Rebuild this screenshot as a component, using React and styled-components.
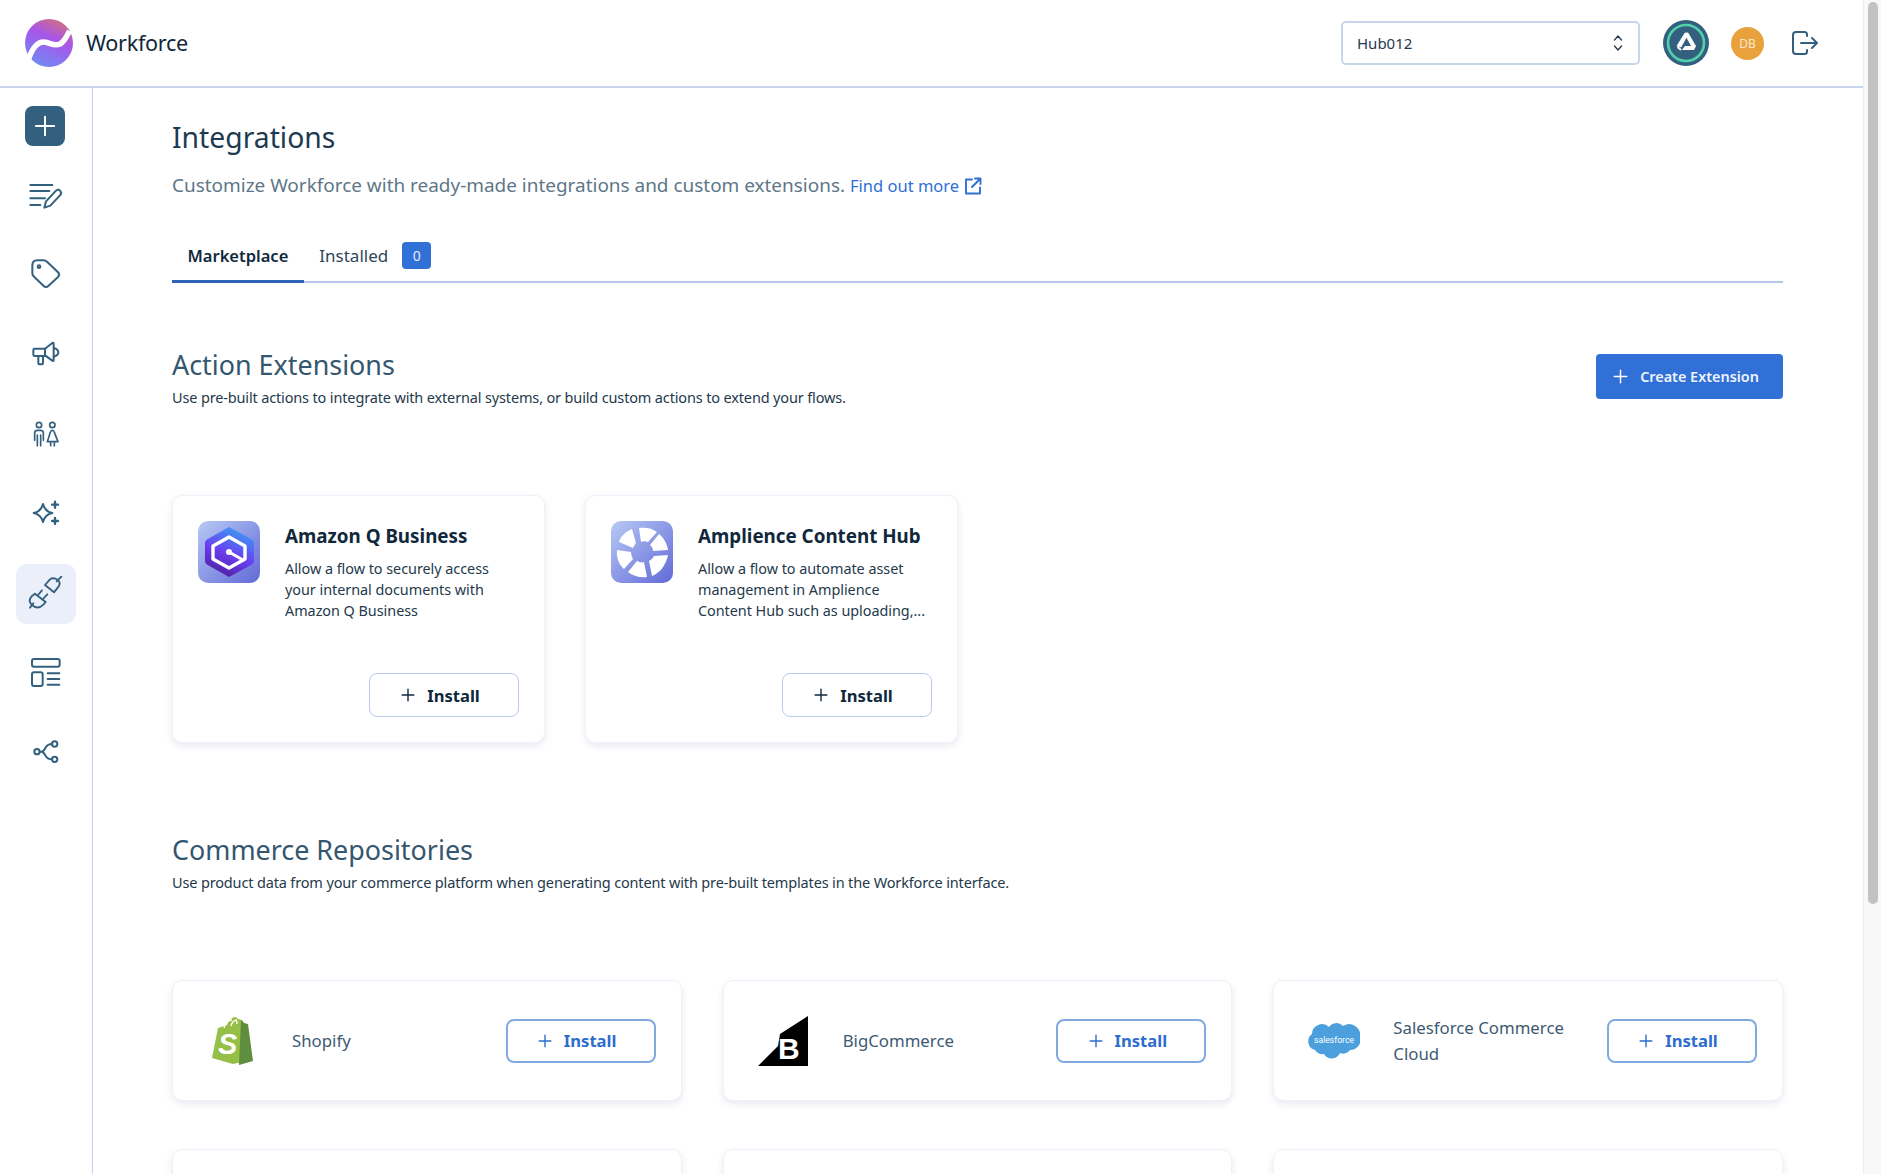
import React from "react";
import styled, { createGlobalStyle } from "styled-components";

const Global = createGlobalStyle`
  html, body { margin: 0; padding: 0; background: #fff; overflow: hidden; }
  body { font-family: "Noto Sans", "Open Sans", sans-serif; -webkit-font-smoothing: antialiased; }
  * { box-sizing: border-box; }
`;

const Shell = styled.div`
  display: flex;
  width: 1881px;
  height: 1174px;
  overflow: hidden;
`;
const Page = styled.div`
  flex: 1;
  min-width: 0;
  display: flex;
  flex-direction: column;
`;
const ScrollTrack = styled.div`
  width: 18px;
  background: #f8f8f8;
  border-left: 1px solid #ececec;
  padding: 2px 3px 0 4px;
`;
const ScrollThumb = styled.div`
  height: 902px;
  border-radius: 5px;
  background: #c2c2c2;
`;

const Header = styled.header`
  height: 88px;
  flex: none;
  display: flex;
  align-items: center;
  border-bottom: 2px solid #c9d5ec;
  padding: 0 44px 0 25px;
`;
const Brand = styled.div`
  display: flex;
  align-items: center;
  gap: 13px;
`;
const BrandName = styled.span`
  font-size: 21.6px;
  color: #10283c;
  letter-spacing: -0.3px;
  position: relative;
  top: -0.5px;
`;
const HeaderRight = styled.div`
  margin-left: auto;
  display: flex;
  align-items: center;
`;
const HubSelect = styled.div`
  width: 299px;
  height: 44px;
  border: 2px solid #c9d5ec;
  border-radius: 5px;
  display: flex;
  align-items: center;
  justify-content: space-between;
  padding: 0 15px 0 14px;
  font-size: 15px;
  color: #1f3a50;
`;
const RingBadge = styled.div`
  width: 46px;
  height: 46px;
  margin-left: 23px;
  display: flex;
`;
const Avatar = styled.div`
  width: 33px;
  height: 33px;
  margin-left: 22px;
  border-radius: 50%;
  background: #e8a13b;
  color: #f9e8cd;
  font-size: 12px;
  display: flex;
  align-items: center;
  justify-content: center;
`;
const LogoutWrap = styled.div`
  margin-left: 28px;
  margin-right: 1px;
  display: flex;
`;

const Body = styled.div`
  flex: 1;
  display: flex;
  min-height: 0;
`;
const Sidebar = styled.nav`
  width: 92.5px;
  flex: none;
  border-right: 1.5px solid #c3d0ec;
  display: flex;
  flex-direction: column;
  align-items: flex-start;
  gap: 19.7px;
  padding: 18px 0 0 15.5px;
`;
const AddButton = styled.div`
  width: 40px;
  height: 40px;
  margin-left: 9.5px;
  border-radius: 8px;
  background: #34607f;
  display: flex;
  align-items: center;
  justify-content: center;
`;
const NavItem = styled.div`
  width: 60px;
  height: 60px;
  border-radius: 11px;
  background: ${(p) => (p.$active ? "#ebeffa" : "transparent")};
  display: flex;
  align-items: center;
  justify-content: center;
`;

const Main = styled.main`
  flex: 1;
  min-width: 0;
  padding: 31px 80px 0 79.5px;
  overflow: hidden;
`;
const Title = styled.h1`
  margin: 0;
  font-size: 28.3px;
  line-height: 36px;
  font-weight: 400;
  color: #1c3a50;
`;
const Subtitle = styled.p`
  margin: 17px 0 0;
  height: 26px;
  display: flex;
  align-items: center;
  font-size: 18.95px;
  line-height: 26px;
  color: #5d7688;
`;
const MoreLink = styled.a`
  margin-left: 5px;
  padding-top: 1px;
  font-size: 16.5px;
  color: #2f6fd6;
  display: inline-flex;
  align-items: center;
  gap: 5px;
`;
const Tabs = styled.div`
  margin-top: 31px;
  height: 54px;
  display: flex;
  border-bottom: 2px solid #b8c6ee;
`;
const Tab = styled.div`
  height: 54px;
  padding: 1.5px 15.5px 0;
  display: flex;
  align-items: center;
  gap: 14px;
  font-size: ${(p) => (p.$active ? "16.5px" : "17px")};
  font-weight: ${(p) => (p.$active ? 600 : 400)};
  color: ${(p) => (p.$active ? "#10283c" : "#2f4659")};
  border-bottom: 3px solid ${(p) => (p.$active ? "#2e65b8" : "transparent")};
`;
const Count = styled.span`
  width: 29px;
  height: 27px;
  border-radius: 4px;
  background: #3170d6;
  color: #e4ecfa;
  font-size: 14px;
  font-weight: 400;
  display: flex;
  align-items: center;
  justify-content: center;
`;
const SectionHead = styled.div`
  margin-top: ${(p) => p.$top}px;
  display: flex;
  justify-content: space-between;
  align-items: flex-start;
`;
const SectionTitle = styled.h2`
  margin: 0;
  font-size: 26.9px;
  line-height: 33px;
  font-weight: 400;
  color: #34566e;
`;
const SectionDesc = styled.p`
  margin: 5px 0 0;
  font-size: 14.5px;
  line-height: 22px;
  letter-spacing: -0.15px;
  color: #24394b;
`;
const PrimaryButton = styled.button`
  width: 187px;
  height: 45px;
  margin-top: 6px;
  padding: 0 7px 0 0;
  border: none;
  border-radius: 4px;
  background: #3170d6;
  color: #eef3fc;
  font: 600 14.4px "Noto Sans", sans-serif;
  display: flex;
  align-items: center;
  justify-content: center;
  gap: 12px;
`;
const ActionGrid = styled.div`
  margin-top: 87px;
  display: flex;
  gap: 40px;
`;
const cardBase = `
  background: #fff;
  border: 1px solid #eef0fa;
  border-radius: 10px;
  box-shadow: 0 3px 7px rgba(70, 90, 150, 0.13);
`;
const ActionCard = styled.article`
  ${cardBase}
  width: 373px;
  height: 248px;
  padding: 25px;
  display: flex;
  flex-direction: column;
`;
const ActionTop = styled.div`
  display: flex;
  gap: 25px;
`;
const ActionText = styled.div`
  padding-top: 3px;
  min-width: 0;
`;
const ActionName = styled.h3`
  margin: 0;
  font-size: 18.8px;
  line-height: 24px;
  font-weight: 700;
  color: #10283c;
  white-space: nowrap;
`;
const ActionDesc = styled.p`
  margin: 10px 0 0;
  font-size: 14.4px;
  line-height: 21px;
  letter-spacing: -0.03px;
  color: #24394b;
  white-space: nowrap;
`;
const InstallButton = styled.button`
  width: 150px;
  height: 44px;
  padding: 0 7px 0 0;
  border-radius: 8px;
  background: #fff;
  font: 700 16.6px "Noto Sans", sans-serif;
  display: flex;
  align-items: center;
  justify-content: center;
  gap: 12px;
  flex: none;
  border: ${(p) => (p.$accent ? "2.5px solid #82aae2" : "1.5px solid #bccaf0")};
  color: ${(p) => (p.$accent ? "#2e6cd0" : "#10283c")};
`;
const ActionFoot = styled.div`
  margin-top: auto;
  display: flex;
  justify-content: flex-end;
`;
const CommerceGrid = styled.div`
  margin-top: 87px;
  display: grid;
  grid-template-columns: repeat(3, 1fr);
  column-gap: 41px;
  row-gap: 48px;
`;
const CommerceCard = styled.article`
  ${cardBase}
  height: 121px;
  display: flex;
  align-items: center;
  padding-right: 25px;
`;
const LogoSlot = styled.div`
  width: 119px;
  flex: none;
  display: flex;
  justify-content: center;
`;
const CommerceName = styled.div`
  flex: 1;
  min-width: 0;
  font-size: 16.8px;
  line-height: 26px;
  color: #3d5a72;
`;

const Icon = ({ box, children, size = 36, weight = 6 }) => (
  <svg width={size} height={size} viewBox={box} fill="none" stroke="#34607f" strokeWidth={weight} strokeLinecap="round" strokeLinejoin="round">
    {children}
  </svg>
);

const Plus = ({ size = 18, color = "currentColor", width = 2 }) => (
  <svg width={size} height={size} viewBox="0 0 18 18" fill="none" stroke={color} strokeWidth={width} strokeLinecap="round">
    <path d="M9 1.500v15M1.500 9h15" />
  </svg>
);

const LogoMark = () => (
  <svg width="48" height="48" viewBox="0 0 48 48">
    <defs>
      <linearGradient id="lg1" x1="0.75" y1="0" x2="0.3" y2="1">
        <stop offset="0" stopColor="#d2707f" />
        <stop offset="0.4" stopColor="#a855ea" />
        <stop offset="1" stopColor="#6f8cf3" />
      </linearGradient>
    </defs>
    <circle cx="24" cy="24" r="24" fill="url(#lg1)" />
    <path d="M3 42C7 29 13 21 22 23.500c4.500 1.300 8 4 13 1.500 4.500-2.300 7-8 9.500-13" fill="none" stroke="#fff" strokeWidth="5.500" />
  </svg>
);

const AmazonQ = () => (
  <svg width="62" height="62" viewBox="0 0 62 62">
    <defs>
      <linearGradient id="tile1" x1="0" y1="0" x2="1" y2="1">
        <stop offset="0" stopColor="#b7c9f5" />
        <stop offset="1" stopColor="#6169d6" />
      </linearGradient>
      <linearGradient id="hex1" x1="0.7" y1="0" x2="0.3" y2="1">
        <stop offset="0" stopColor="#3aa0f5" />
        <stop offset="0.55" stopColor="#6a3df0" />
        <stop offset="1" stopColor="#4e1f9e" />
      </linearGradient>
    </defs>
    <rect width="62" height="62" rx="10" fill="url(#tile1)" />
    <path d="M31 6l23 12.500a4 4 0 0 1 2 3.500v18a4 4 0 0 1-2 3.500L31 56 9 43.500a4 4 0 0 1-2-3.500V22a4 4 0 0 1 2-3.500z" fill="url(#hex1)" />
    <path d="M31 16l16 9v13l-16 9-16-9V25z" fill="none" stroke="#fff" strokeWidth="3.400" strokeLinejoin="round" />
    <circle cx="31" cy="31" r="3" fill="#fff" />
    <path d="M31 31l14 8" stroke="#fff" strokeWidth="3" />
  </svg>
);

const Amplience = () => (
  <svg width="62" height="62" viewBox="0 0 62 62">
    <defs>
      <linearGradient id="tile2" x1="0" y1="0" x2="1" y2="1">
        <stop offset="0" stopColor="#b7c9f5" />
        <stop offset="1" stopColor="#6169d6" />
      </linearGradient>
    </defs>
    <rect width="62" height="62" rx="10" fill="url(#tile2)" />
    <g fill="#fff">
      <path d="M28 7c7-1 13 0 18 4l-9 10c-3-1-5-1-7 0z" />
      <path d="M8 21c2-6 6-10 13-13l4 14c-1 1-2 3-3 5z" />
      <path d="M6 29l14 2c0 3 1 5 2 7l-9 10C8 44 5 36 6 29z" />
      <path d="M17 51l9-11c2 1 5 2 7 1l3 15c-7 1-14-1-19-5z" />
      <path d="M41 55l-3-15c2-1 4-3 5-5l14-1c-2 10-8 18-16 21z" />
      <path d="M57 29l-15 1c0-3-1-4-3-6l9-11c5 4 8 10 9 16z" />
    </g>
  </svg>
);

const Shopify = () => (
  <svg width="44" height="49" viewBox="0 0 44 49">
    <path d="M1 42L7 12l9-3c2-5 5-8 9-8l2 2 4 1 2 3 3 38-14 3z" fill="#95bf47" />
    <path d="M30 4l3 3 4 1 5 37-14 4z" fill="#5e8e3e" />
    <path d="M13 12c1-5 4-8 8-8M20 10c1-4 3-6 6-6M26 8c0-2 0-3-1-4" fill="none" stroke="#fff" strokeWidth="1.400" />
    <text x="7" y="38" fontFamily="Liberation Sans, sans-serif" fontSize="29" fontWeight="700" fontStyle="italic" fill="#fff">S</text>
  </svg>
);

const BigCommerce = () => (
  <svg width="50" height="50" viewBox="0 0 50 50">
    <path d="M50 0v50H0l20-20 2-12z" fill="#000" />
    <text x="20" y="43" fontFamily="Liberation Sans, sans-serif" fontSize="30" fontWeight="700" fill="#fff">B</text>
  </svg>
);

const Salesforce = () => (
  <svg width="52" height="37" viewBox="0 0 52 37">
    <path d="M21 5a9 9 0 0 1 14-1 11 11 0 0 1 17 11 10 10 0 0 1-10 13 8 8 0 0 1-10 3 9 9 0 0 1-16 1 9 9 0 0 1-9-4A9 9 0 0 1 4 12a10 10 0 0 1 17-7z" fill="#4a9fdc" />
    <text x="26" y="20.500" textAnchor="middle" fontFamily="Roboto, sans-serif" fontSize="8.600" fill="#fff">salesforce</text>
  </svg>
);

const actions = [
  { name: "Amazon Q Business", logo: <AmazonQ />, lines: ["Allow a flow to securely access", "your internal documents with", "Amazon Q Business"] },
  { name: "Amplience Content Hub", logo: <Amplience />, lines: ["Allow a flow to automate asset", "management in Amplience", "Content Hub such as uploading,..."] },
];

const commerce = [
  { name: "Shopify", logo: <Shopify /> },
  { name: "BigCommerce", logo: <BigCommerce /> },
  { name: "Salesforce Commerce Cloud", logo: <Salesforce /> },
  {},
  {},
  {},
];

const navIcons = [
  <Icon box="81 51 108 108" key="doc">
    <path d="M88 72H154M88 90H145M88 112H132M88 132H118" />
    <path d="M130 140l5-19 30-32c5-4 10-3 13 1s3 9-1 13l-29 31z" />
  </Icon>,
  <Icon box="81 293 108 108" key="tag">
    <path d="M94 318c0-10 6-15 15-15h17c5 0 9 1 13 5l32 31c4 4 4 10 0 14l-29 27c-4 4-10 4-14 0l-31-30c-2-2-3-5-3-8z" />
    <circle cx="114" cy="322" r="4" />
  </Icon>,
  <Icon box="81 533 108 108" key="mega">
    <path d="M132 568l22-17c2-1 4 0 4 2v49c0 3-2 4-4 2l-22-16z" />
    <path d="M132 568h-31c-2 0-4 2-4 4v14c0 2 2 4 4 4h31z" />
    <path d="M112 590v20c0 3 2 5 5 5h4c3 0 5-2 5-5v-20" />
    <path d="M158 566c9 2 14 7 14 13s-5 11-14 13" />
  </Icon>,
  <Icon box="81 772 108 108" key="people" weight={5}>
    <circle cx="114" cy="796" r="8" />
    <circle cx="154" cy="796" r="8" />
    <path d="M101 842v-22c0-5 3-8 8-8h10c5 0 8 3 8 8v22M109 826v32M119 826v32" />
    <path d="M139 846l9-28c1-4 3-6 6-6s5 2 6 6l11 28zM149 846v12M160 846v12" />
  </Icon>,
  <Icon box="77 49 108 108" key="spark">
    <path d="M122 73c4 16 12 24 28 27-16 3-24 11-28 27-4-16-12-24-28-27 16-3 24-11 28-27z" />
    <path d="M158 66v18M149 75h18M158 115v18M149 124h18" strokeWidth="7" />
  </Icon>,
  <Icon box="82 290 108 108" key="plug" weight={5.500}>
    <path d="M133 318l27 22 14-18c6-10 4-15-4-20-7-5-14-6-22-1z" transform="translate(0 -1)" />
    <path d="M168 306l14-14" />
    <path d="M103 343l32 25-7 8c-12 12-24 10-34 1-9-9-8-19-1-26z" />
    <path d="M112 347l12-14M127 359l13-14M98 372l-10 13" />
  </Icon>,
  <Icon box="81 528 108 108" key="layout">
    <rect x="93" y="537" width="83" height="23" rx="6" />
    <rect x="93" y="577" width="32" height="41" rx="6" />
    <path d="M140 580h35M140 597h35M140 614h35" />
  </Icon>,
  <Icon box="77 766 108 108" key="share">
    <circle cx="104" cy="813" r="8" />
    <circle cx="157" cy="790" r="8" />
    <circle cx="157" cy="836" r="8" />
    <path d="M112 813h5c7 0 9-5 12-11 4-8 9-12 20-12M117 813c7 0 9 5 12 11 4 8 9 12 20 12" />
  </Icon>,
];

export default function App() {
  return (
    <Shell>
      <Global />
      <Page>
        <Header>
          <Brand>
            <LogoMark />
            <BrandName>Workforce</BrandName>
          </Brand>
          <HeaderRight>
            <HubSelect>
              Hub012
              <svg width="10" height="18" viewBox="0 0 10 18" fill="none" stroke="#24394b" strokeWidth="1.300" strokeLinecap="round" strokeLinejoin="round">
                <path d="M1.500 6L5 2l3.500 4M1.500 12L5 16l3.500-4" />
              </svg>
            </HubSelect>
            <RingBadge>
              <svg width="46" height="46" viewBox="0 0 46 46">
                <circle cx="23" cy="23" r="23" fill="#34607f" />
                <circle cx="23" cy="23" r="18" fill="none" stroke="#4fd0ab" strokeWidth="2.600" />
                <path d="M22 13h3l7.500 13-3 2L23.500 17 18 27l-4-1z" fill="#fff" stroke="#fff" strokeWidth="0.800" strokeLinejoin="round" />
                <path d="M19 30l3-4h11l-2 4z" fill="#fff" />
                <path d="M14.500 27l3.500 3" stroke="#fff" strokeWidth="2" />
              </svg>
            </RingBadge>
            <Avatar>DB</Avatar>
            <LogoutWrap>
              <svg width="26" height="24" viewBox="0 0 26 24" fill="none" stroke="#34607f" strokeWidth="2" strokeLinecap="round" strokeLinejoin="round">
                <path d="M15 5V3.500C15 2 14 1 12.500 1H4C2 1 1 2 1 4v16c0 2 1 3 3 3h8.500c1.500 0 2.500-1 2.500-2.500V19" />
                <path d="M9 12h16M20 7l5 5-5 5" />
              </svg>
            </LogoutWrap>
          </HeaderRight>
        </Header>
        <Body>
          <Sidebar>
            <AddButton>
              <Plus size={22} color="#fff" width={1.6} />
            </AddButton>
            {navIcons.map((ic, i) => (
              <NavItem key={i} $active={i === 5}>
                {ic}
              </NavItem>
            ))}
          </Sidebar>
          <Main>
            <Title>Integrations</Title>
            <Subtitle>
              Customize Workforce with ready-made integrations and custom extensions.
              <MoreLink>
                Find out more
                <svg width="18" height="18" viewBox="0 0 18 18" fill="none" stroke="#2f6fd6" strokeWidth="1.900" strokeLinecap="round" strokeLinejoin="round">
                  <path d="M8 2.500H2v14h14v-6" />
                  <path d="M11 1.500h5.500V7M16.500 1.500L8 10" />
                </svg>
              </MoreLink>
            </Subtitle>
            <Tabs>
              <Tab $active>Marketplace</Tab>
              <Tab>
                Installed
                <Count>0</Count>
              </Tab>
            </Tabs>

            <SectionHead $top={65}>
              <div>
                <SectionTitle>Action Extensions</SectionTitle>
                <SectionDesc>Use pre-built actions to integrate with external systems, or build custom actions to extend your flows.</SectionDesc>
              </div>
              <PrimaryButton>
                <Plus size={15} color="#fff" width={1.8} />
                Create Extension
              </PrimaryButton>
            </SectionHead>
            <ActionGrid>
              {actions.map((a) => (
                <ActionCard key={a.name}>
                  <ActionTop>
                    {a.logo}
                    <ActionText>
                      <ActionName>{a.name}</ActionName>
                      <ActionDesc>
                        {a.lines.map((l) => (
                          <React.Fragment key={l}>
                            {l}
                            <br />
                          </React.Fragment>
                        ))}
                      </ActionDesc>
                    </ActionText>
                  </ActionTop>
                  <ActionFoot>
                    <InstallButton>
                      <Plus size={14} width={1.8} />
                      Install
                    </InstallButton>
                  </ActionFoot>
                </ActionCard>
              ))}
            </ActionGrid>

            <SectionHead $top={90}>
              <div>
                <SectionTitle>Commerce Repositories</SectionTitle>
                <SectionDesc>Use product data from your commerce platform when generating content with pre-built templates in the Workforce interface.</SectionDesc>
              </div>
            </SectionHead>
            <CommerceGrid>
              {commerce.map((c, i) => (
                <CommerceCard key={i}>
                  {c.name && (
                    <>
                      <LogoSlot>{c.logo}</LogoSlot>
                      <CommerceName>{c.name}</CommerceName>
                      <InstallButton $accent>
                        <Plus size={14} width={1.8} />
                        Install
                      </InstallButton>
                    </>
                  )}
                </CommerceCard>
              ))}
            </CommerceGrid>
          </Main>
        </Body>
      </Page>
      <ScrollTrack>
        <ScrollThumb />
      </ScrollTrack>
    </Shell>
  );
}
